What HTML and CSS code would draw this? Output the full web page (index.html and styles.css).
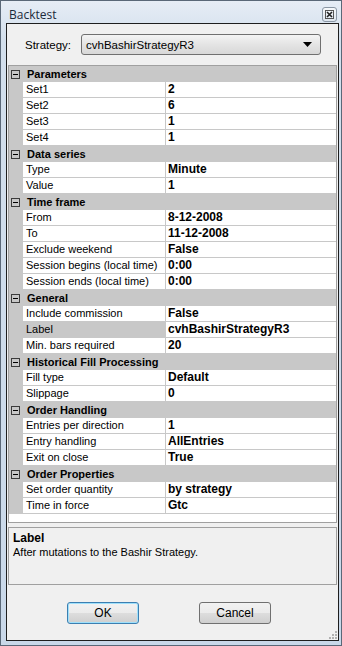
FILE: index.html
```html
<!DOCTYPE html>
<html lang="en">
<head>
  <meta charset="UTF-8">
  <title>Backtest</title>
  <link rel="stylesheet" href="styles.css">
</head>
<body>

  <div class="window">
    <div class="titlebar">
      <span class="title">Backtest</span>
      <span class="close-btn">
        <svg width="9" height="9" viewBox="0 0 9 9">
          <rect x="0.5" y="0.5" width="8" height="8" fill="none" stroke="#555" />
          <path d="M2 2 L7 7 M7 2 L2 7" stroke="#222" stroke-width="1.6" />
        </svg>
      </span>
    </div>

    <div class="client">
      <div class="strategy-bar">
        <span class="strategy-label">Strategy:</span>
        <div class="combo">
          <span>cvhBashirStrategyR3</span>
          <svg class="combo-arrow" width="9" height="5" viewBox="0 0 9 5"><path d="M0 0 H9 L4.5 5 Z" fill="#000" /></svg>
        </div>
      </div>

      <div class="grid" id="grid">
        <!-- rows are built by the script below -->
      </div>

      <div class="desc">
        <div class="desc-title">Label</div>
        <div>After mutations to the Bashir Strategy.</div>
      </div>

      <div class="buttons">
        <button class="btn btn-default">OK</button>
        <button class="btn">Cancel</button>
      </div>

      <div class="grip">
        <svg width="9" height="9" viewBox="0 0 9 9" fill="#b0b0b0">
          <rect x="7" y="1" width="2" height="2" />
          <rect x="4" y="4" width="2" height="2" />
          <rect x="7" y="4" width="2" height="2" />
          <rect x="1" y="7" width="2" height="2" />
          <rect x="4" y="7" width="2" height="2" />
          <rect x="7" y="7" width="2" height="2" />
        </svg>
      </div>
    </div>
  </div>

  <script>
    const sections = [
      ['Parameters', [['Set1', '2'], ['Set2', '6'], ['Set3', '1'], ['Set4', '1']]],
      ['Data series', [['Type', 'Minute'], ['Value', '1']]],
      ['Time frame', [['From', '8-12-2008'], ['To', '11-12-2008'], ['Exclude weekend', 'False'],
                      ['Session begins (local time)', '0:00'], ['Session ends (local time)', '0:00']]],
      ['General', [['Include commission', 'False'], ['Label', 'cvhBashirStrategyR3', true], ['Min. bars required', '20']]],
      ['Historical Fill Processing', [['Fill type', 'Default'], ['Slippage', '0']]],
      ['Order Handling', [['Entries per direction', '1'], ['Entry handling', 'AllEntries'], ['Exit on close', 'True']]],
      ['Order Properties', [['Set order quantity', 'by strategy'], ['Time in force', 'Gtc']]]
    ];

    let rows = '';
    sections.forEach(([title, items]) => {
      rows += `
        <div class="cat">
          <span class="margin"><span class="toggle"></span></span>
          <span class="cat-name">${title}</span>
        </div>`;
      items.forEach(([name, value, selected]) => {
        rows += `
          <div class="row">
            <span class="margin"></span>
            <span class="name${selected ? ' selected' : ''}">${name}</span>
            <span class="value">${value}</span>
          </div>`;
      });
    });
    document.getElementById('grid').innerHTML = rows;
  </script>

</body>
</html>
```

FILE: styles.css
```css
body {
  margin: 0;
  font-family: "Liberation Sans", Arial, sans-serif;
  font-size: 11px;
  color: #000;
}
.window {
  width: 342px;
  height: 646px;
  box-sizing: border-box;
  border: 1px solid #5a6878;
  background: linear-gradient(to bottom, #e6edf6 0px, #d3dfec 40px, #c9d8e9 100%);
  padding: 0 3px 5px 5px;
  position: relative;
}
.titlebar {
  height: 22px;
  display: flex;
  align-items: center;
  justify-content: space-between;
}
.title {
  font-family: "Open Sans", "DejaVu Sans", sans-serif;
  font-size: 12px;
  color: #1c2a3a;
  padding-left: 3px;
  padding-top: 4px;
}
.close-btn {
  width: 15px;
  height: 15px;
  box-sizing: border-box;
  border: 1px solid #8a96a4;
  border-radius: 3px;
  background: linear-gradient(to bottom, #f6f8fb, #dde5ee);
  display: flex;
  align-items: center;
  justify-content: center;
  margin-top: 5px;
  margin-right: 1px;
}
.client {
  position: relative;
  width: 333px;
  height: 618px;
  box-sizing: border-box;
  border: 1px solid #1e1e1e;
  background: #f0f0f0;
}
.strategy-bar {
  display: flex;
  align-items: center;
  padding: 10px 0 10px 18px;
}
.strategy-label {
  width: 56px;
  font-size: 11.5px;
}
.combo {
  width: 240px;
  height: 21px;
  box-sizing: border-box;
  border: 1px solid #707070;
  border-radius: 3px;
  background: linear-gradient(to bottom, #f4f4f4, #e4e4e4 50%, #d8d8d8);
  display: flex;
  align-items: center;
  justify-content: space-between;
  padding: 0 8px 0 4px;
  font-size: 11.5px;
}
.grid {
  margin-left: 1px;
  width: 329px;
  height: 458px;
  box-sizing: border-box;
  border: 1px solid #a0a0a0;
  background: #fff;
}
.cat, .row {
  display: flex;
  height: 16px;
}
.margin {
  width: 14px;
  flex: none;
  background: #c8c8c8;
  display: flex;
  align-items: center;
}
.cat {
  background: #c8c8c8;
}
.toggle {
  position: relative;
  width: 9px;
  height: 9px;
  box-sizing: border-box;
  border: 1px solid #3c3c3c;
  margin-left: 2px;
}
.toggle::after {
  content: "";
  position: absolute;
  left: 1px;
  top: 3px;
  width: 5px;
  height: 1px;
  background: #000;
}
.cat-name {
  font-weight: bold;
  padding-left: 4px;
  line-height: 16px;
}
.name, .value {
  box-sizing: border-box;
  border-bottom: 1px solid #c8c8c8;
  line-height: 15px;
  white-space: nowrap;
}
.name {
  width: 143px;
  padding-left: 3px;
  border-right: 1px solid #c8c8c8;
}
.name.selected {
  background: #c8c8c8;
}
.value {
  flex: 1;
  padding-left: 2px;
  font-weight: bold;
  font-size: 12px;
}
.desc {
  margin: 4px 0 0 1px;
  width: 329px;
  height: 58px;
  box-sizing: border-box;
  border: 1px solid #a0a0a0;
  padding: 3px 4px;
  line-height: 14px;
}
.desc-title {
  font-weight: bold;
  font-size: 12px;
}
.buttons {
  display: flex;
  padding: 17px 0 0 60px;
  gap: 60px;
}
.btn {
  width: 72px;
  height: 22px;
  font-family: "Liberation Sans", Arial, sans-serif;
  font-size: 12px;
  border: 1px solid #707070;
  border-radius: 3px;
  background: linear-gradient(to bottom, #f2f2f2 0%, #ebebeb 50%, #dddddd 51%, #cfcfcf 100%);
  padding: 0;
}
.btn-default {
  border-color: #3c7fb1;
  box-shadow: inset 0 0 0 1px #9fe0fb;
}
.grip {
  position: absolute;
  right: 1px;
  bottom: 1px;
  line-height: 0;
}
```
